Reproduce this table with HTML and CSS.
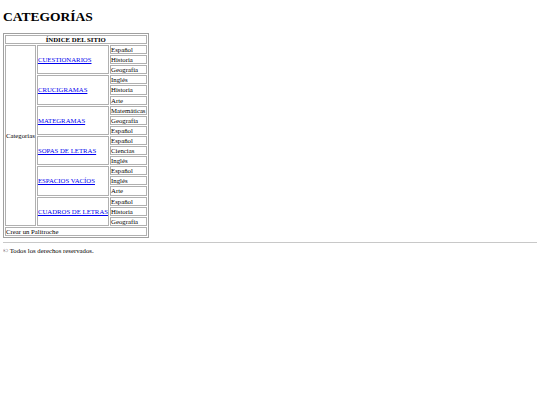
FILE: index.html
```html
<!DOCTYPE html>
<html lang="es">
<head>
<meta charset="utf-8">
<title>Categorías</title>
<link rel="stylesheet" href="styles.css">
</head>
<body>
<h1 class="title">CATEGORÍAS</h1>
<table class="index">
  <tr><th colspan="3">ÍNDICE DEL SITIO</th></tr>
  <tr><td rowspan="18">Categorías</td><td rowspan="3"><a href="#">CUESTIONARIOS</a></td><td>Español</td></tr>
  <tr><td>Historia</td></tr>
  <tr><td>Geografía</td></tr>
  <tr><td rowspan="3"><a href="#">CRUCIGRAMAS</a></td><td>Inglés</td></tr>
  <tr><td>Historia</td></tr>
  <tr><td>Arte</td></tr>
  <tr><td rowspan="3"><a href="#">MATEGRAMAS</a></td><td>Matemáticas</td></tr>
  <tr><td>Geografía</td></tr>
  <tr><td>Español</td></tr>
  <tr><td rowspan="3"><a href="#">SOPAS DE LETRAS</a></td><td>Español</td></tr>
  <tr><td>Ciencias</td></tr>
  <tr><td>Inglés</td></tr>
  <tr><td rowspan="3"><a href="#">ESPACIOS VACÍOS</a></td><td>Español</td></tr>
  <tr><td>Inglés</td></tr>
  <tr><td>Arte</td></tr>
  <tr><td rowspan="3"><a href="#">CUADROS DE LETRAS</a></td><td>Español</td></tr>
  <tr><td>Historia</td></tr>
  <tr><td>Geografía</td></tr>
  <tr><td colspan="3">Crear un Palitroche</td></tr>
</table>
<hr class="rule">
<p class="footer">© Todos los derechos reservados.</p>
</body>
</html>
```
FILE: styles.css
```css
body {
  margin: 3px;
  font-family: "Liberation Serif", "Times New Roman", serif;
  color: #000;
  background: #fff;
}
.title {
  font-size: 13.5px;
  font-weight: bold;
  margin: 6px 0 8px;
  line-height: 16px;
}
.index {
  border: 1px solid #a0a0a0;
  border-spacing: 1px;
  font-size: 6.75px;
  line-height: 7.1px;
}
.index th,
.index td {
  border: 1px solid #b0b0b0;
  padding: 0;
}
.index th {
  font-weight: bold;
  text-align: center;
}
.index a {
  color: #0000ee;
}
.rule {
  margin: 4px 0;
  border: none;
  border-top: 1px solid #c8c8c8;
  height: 0;
}
.footer {
  margin: 4px 0;
  font-size: 6.75px;
}
```
